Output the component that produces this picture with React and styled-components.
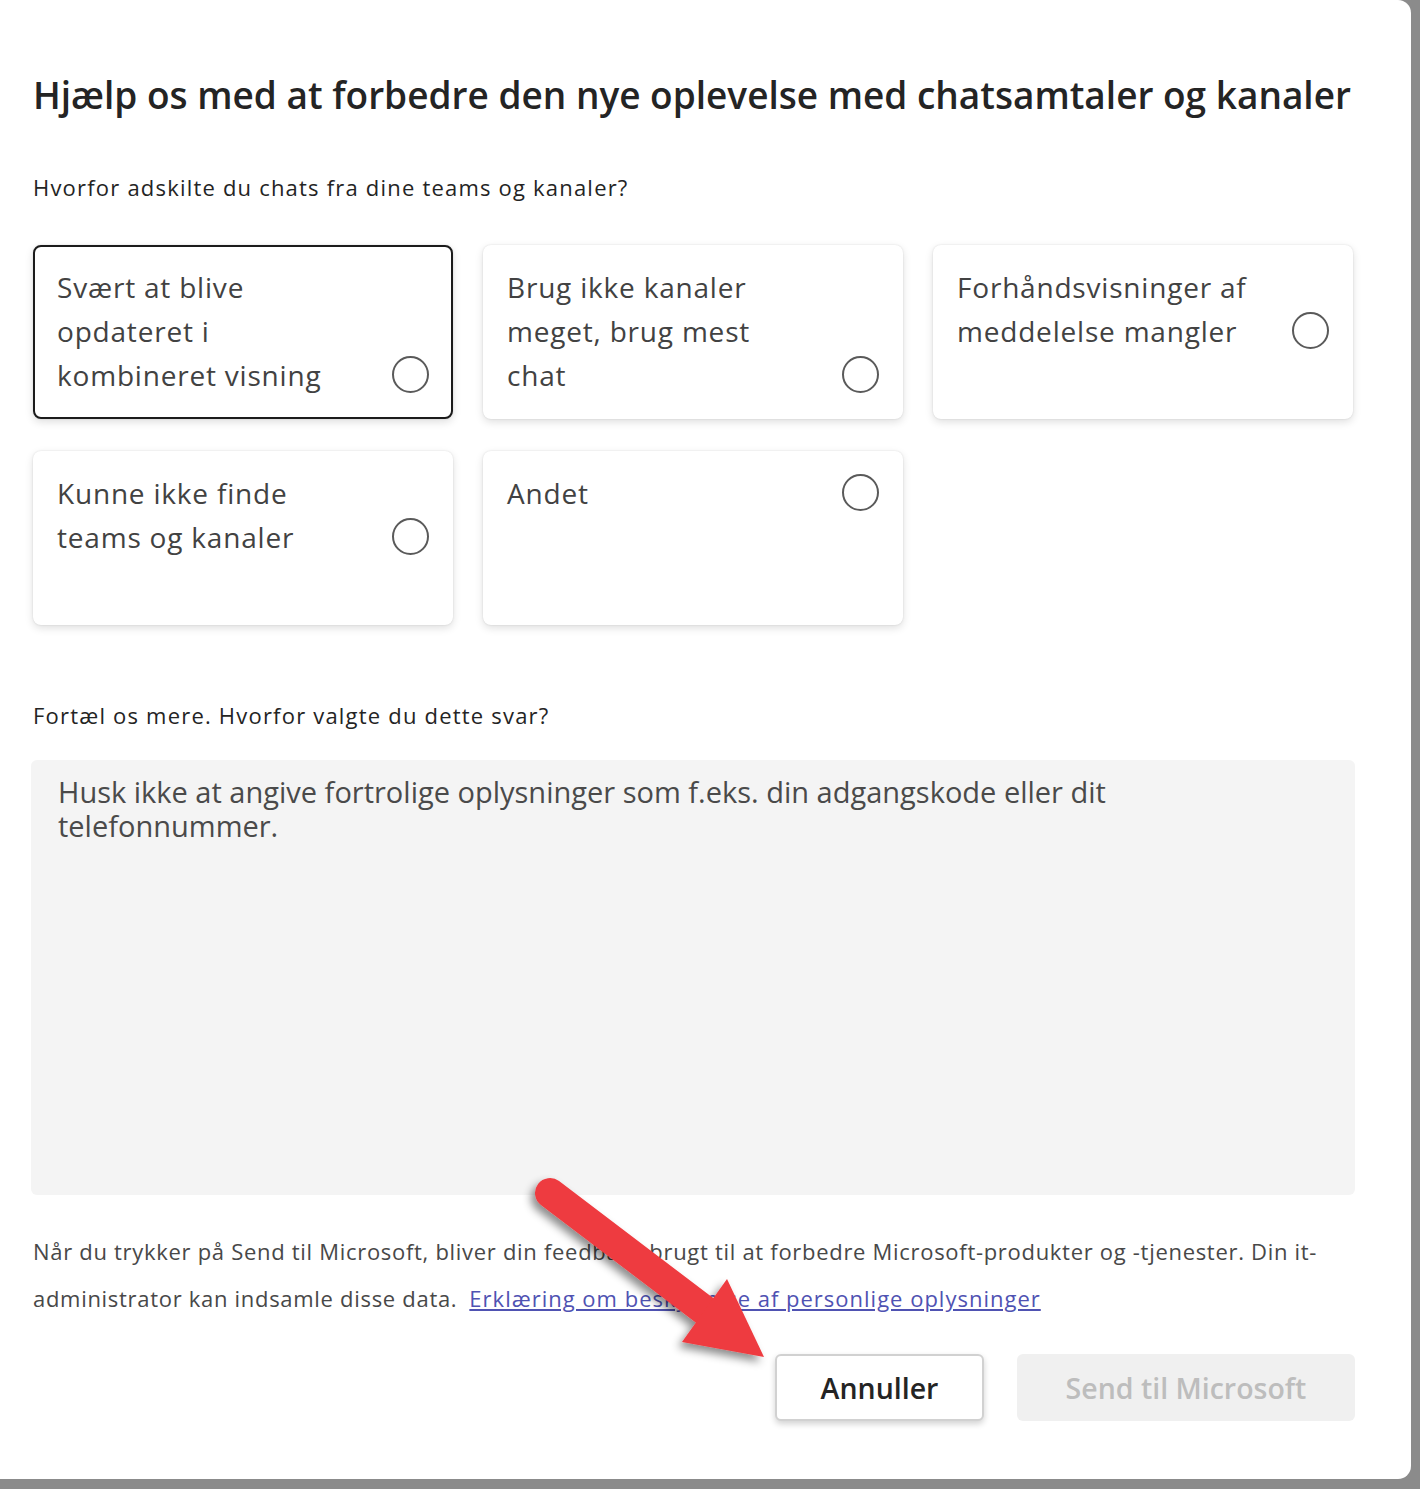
import React from "react";
import styled, { createGlobalStyle } from "styled-components";

const Global = createGlobalStyle`
  html, body { margin: 0; padding: 0; background: #8b8b8b; }
  body { font-family: "Open Sans", "Noto Sans", sans-serif; }
  * { box-sizing: border-box; }
`;

const Page = styled.div`
  width: 1420px;
  height: 1489px;
  background: #8b8b8b;
  position: relative;
  overflow: hidden;
`;

const Dialog = styled.div`
  position: relative;
  width: 1411px;
  height: 1479px;
  background: #ffffff;
  border-radius: 0 13px 13px 0;
  padding: 71px 58px 0 33px;
  display: flex;
  flex-direction: column;
`;

const Title = styled.h1`
  margin: 0;
  font-size: 37px;
  line-height: 48px;
  font-weight: 600;
  color: #242424;
  white-space: nowrap;
`;

const Label = styled.div`
  margin-top: ${(p) => p.$mt}px;
  font-size: 22px;
  line-height: 30px;
  letter-spacing: 1.2px;
  color: #242424;
`;

const Grid = styled.div`
  margin-top: 43px;
  display: grid;
  grid-template-columns: repeat(3, 420px);
  column-gap: 30px;
  row-gap: 32px;
`;

const Card = styled.div`
  min-height: 174px;
  background: #fff;
  border-radius: 8px;
  padding: 19px 24px 20px 24px;
  display: flex;
  align-items: flex-start;
  justify-content: space-between;
  gap: 12px;
  border: ${(p) => (p.$selected ? "2px solid #1b1b1b" : "2px solid transparent")};
  box-shadow: 0 3px 8px rgba(0, 0, 0, 0.13), 0 0 2px rgba(0, 0, 0, 0.12);
`;

const CardText = styled.div`
  font-size: 28px;
  line-height: 44px;
  letter-spacing: 0.8px;
  color: #424242;
  max-width: 304px;
  margin-top: -1px;
  margin-left: -2px;
`;

const RadioWrap = styled.div`
  height: ${(p) => p.$h}px;
  display: flex;
  align-items: flex-end;
  flex-shrink: 0;
  padding-bottom: 4px;
  margin-right: -2px;
`;

const Radio = styled.span`
  display: block;
  width: 37px;
  height: 37px;
  border-radius: 50%;
  border: 2px solid #5a5a5a;
`;

const TextArea = styled.div`
  margin: 30px -2px 0 -2px;
  height: 435px;
  background: #f4f4f4;
  border-radius: 6px;
  padding: 15px 27px;
  font-size: 29px;
  line-height: 34px;
  color: #4a4a4a;
`;

const Disclaimer = styled.p`
  margin: 33px 0 0 0;
  font-size: 22px;
  line-height: 47px;
  letter-spacing: 0.7px;
  color: #484848;
`;

const Link = styled.a`
  color: #4f52b2;
  text-decoration: underline;
  margin-left: 12px;
  letter-spacing: 1px;
`;

const Actions = styled.div`
  margin-top: 32px;
  margin-right: -2px;
  display: flex;
  justify-content: flex-end;
  gap: 33px;
`;

const Button = styled.button`
  height: 67px;
  width: ${(p) => p.$w}px;
  border-radius: 6px;
  font-family: inherit;
  font-size: 28.5px;
  font-weight: 600;
  padding: 0;
  cursor: pointer;
  ${(p) =>
    p.$disabled
      ? `
    background: #f0f0f0;
    color: #bdbdbd;
    border: none;
  `
      : `
    background: #ffffff;
    color: #242424;
    border: 2px solid #d1d1d1;
    box-shadow: 0 3px 6px rgba(0,0,0,0.18);
  `}
`;

const ArrowSvg = styled.svg`
  position: absolute;
  left: 0;
  top: 0;
  pointer-events: none;
`;

const options = [
  { text: "Svært at blive opdateret i kombineret visning", lines: 3, selected: true },
  { text: "Brug ikke kanaler meget, brug mest chat", lines: 3 },
  { text: "Forhåndsvisninger af meddelelse mangler", lines: 2 },
  { text: "Kunne ikke finde teams og kanaler", lines: 2 },
  { text: "Andet", lines: 1 },
];

export default function App() {
  return (
    <Page>
      <Global />
      <Dialog>
        <Title>Hjælp os med at forbedre den nye oplevelse med chatsamtaler og kanaler</Title>
        <Label $mt={53}>Hvorfor adskilte du chats fra dine teams og kanaler?</Label>
        <Grid>
          {options.map((o) => (
            <Card key={o.text} $selected={o.selected}>
              <CardText>{o.text}</CardText>
              <RadioWrap $h={o.lines * 44 - 1}>
                <Radio />
              </RadioWrap>
            </Card>
          ))}
        </Grid>
        <Label $mt={75}>Fortæl os mere. Hvorfor valgte du dette svar?</Label>
        <TextArea>
          Husk ikke at angive fortrolige oplysninger som f.eks. din adgangskode eller dit
          <br />
          telefonnummer.
        </TextArea>
        <Disclaimer>
          Når du trykker på Send til Microsoft, bliver din feedback brugt til at forbedre
          Microsoft-produkter og -tjenester. Din it-administrator kan indsamle disse data.
          <Link href="#">Erklæring om beskyttelse af personlige oplysninger</Link>
        </Disclaimer>
        <Actions>
          <Button $w={209}>Annuller</Button>
          <Button $w={338} $disabled>
            Send til Microsoft
          </Button>
        </Actions>
      </Dialog>
      <ArrowSvg width="1420" height="1489" viewBox="0 0 1420 1489">
        <defs>
          <filter id="sh" x="-20%" y="-20%" width="140%" height="140%">
            <feDropShadow dx="-4" dy="5" stdDeviation="4" floodColor="#000" floodOpacity="0.45" />
          </filter>
        </defs>
        <g filter="url(#sh)" fill="#ee3b3f" stroke="none">
          <line x1="550" y1="1193" x2="712" y2="1316" stroke="#ee3b3f" strokeWidth="30" strokeLinecap="round" />
          <polygon points="764,1357 682,1342 727,1279" />
        </g>
      </ArrowSvg>
    </Page>
  );
}
